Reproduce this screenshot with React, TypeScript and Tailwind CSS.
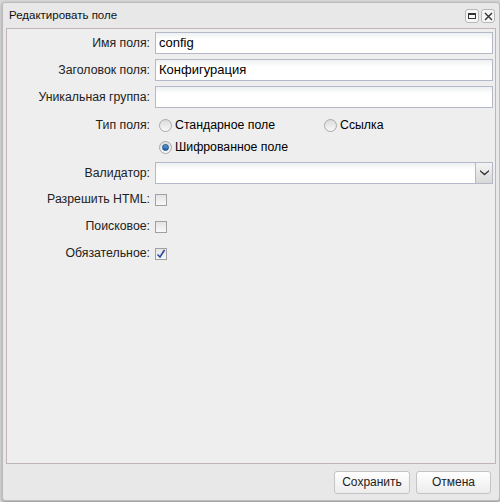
import React from "react";

const font = { fontFamily: '"Liberation Sans", Arial, sans-serif' };

function TextInput({ value }: { value?: string }) {
  return (
    <div className="h-[22px] flex-1 border border-[#b5b8c8] bg-gradient-to-b from-[#eef1f1] to-white to-[35%] px-[3px] flex items-center text-[13px] text-black">
      {value}
    </div>
  );
}

function Row({ label, children, h = "h-[22px]" }: { label: string; children: React.ReactNode; h?: string }) {
  return (
    <div className={`flex items-center ${h}`}>
      <div className="w-[148px] text-right pr-[5px] text-[12.3px] text-[#222]">{label}</div>
      {children}
    </div>
  );
}

function Radio({ checked }: { checked?: boolean }) {
  return (
    <span className="w-[13px] h-[13px] rounded-full border border-[#a9a9a9] bg-gradient-to-b from-[#dcdcdc] to-[#f8f8f8] flex items-center justify-center">
      {checked && <span className="w-[7px] h-[7px] rounded-full bg-gradient-to-b from-[#5aa0e0] to-[#1c5ea8] border border-[#1c4a80]" />}
    </span>
  );
}

function Check({ checked }: { checked?: boolean }) {
  return (
    <span className="w-[12px] h-[12px] border border-[#a0a0a0] bg-gradient-to-b from-[#e4e4e4] to-[#f8f8f8] flex items-center justify-center">
      {checked && (
        <svg width="10" height="10" viewBox="0 0 10 10">
          <path d="M1.5 5.5 L4 8 L8.5 1" stroke="#2a4a9a" strokeWidth="1.6" fill="none" />
        </svg>
      )}
    </span>
  );
}

export default function App() {
  return (
    <div className="w-[500px] h-[502px] bg-[#d8d8d8] relative overflow-hidden" style={font}>
      <div className="absolute left-[2px] top-[2px] right-0 bottom-[1px] bg-[#e8e8e8] border border-[#bcbcbc] rounded-[3px] shadow-[0_1px_3px_rgba(0,0,0,0.35)] flex flex-col">
        <div className="h-[25px] flex items-center pl-[6px] pr-[4px]">
          <div className="text-[11.5px] text-[#111] flex-1 pt-[1px]">Редактировать поле</div>
          <div className="flex gap-[2px] mt-[1px]">
            <div className="w-[14px] h-[14px] border border-[#b8b8b8] rounded-[3px] bg-[#f6f6f6] flex items-center justify-center">
              <div className="w-[8px] h-[6px] border border-[#333] border-t-2" />
            </div>
            <div className="w-[14px] h-[14px] border border-[#b8b8b8] rounded-[3px] bg-[#f6f6f6] flex items-center justify-center">
              <svg width="9" height="9" viewBox="0 0 9 9">
                <path d="M1 1 L8 8 M8 1 L1 8" stroke="#333" strokeWidth="1.4" />
              </svg>
            </div>
          </div>
        </div>
        <div className="mx-[3px] flex-1 border border-[#bfb5b5] bg-[#eeeeee] pt-[3px] pr-[2px] flex flex-col">
          <div className="flex flex-col gap-[5px]">
            <Row label="Имя поля:"><TextInput value="config" /></Row>
            <Row label="Заголовок поля:"><TextInput value="Конфигурация" /></Row>
            <Row label="Уникальная группа:"><TextInput /></Row>
          </div>
          <div className="flex mt-[6px]">
            <div className="w-[148px] text-right pr-[5px] text-[12.3px] text-[#222] h-[22px] flex items-center justify-end">Тип поля:</div>
            <div className="flex flex-col pl-[4px]">
              <div className="flex h-[22px] items-center">
                <div className="w-[165px] flex items-center gap-[3px] text-[12.3px] text-black"><Radio />Стандарное поле</div>
                <div className="flex items-center gap-[3px] text-[12.3px] text-black"><Radio />Ссылка</div>
              </div>
              <div className="flex h-[22px] items-center gap-[3px] text-[12.3px] text-black"><Radio checked />Шифрованное поле</div>
            </div>
          </div>
          <div className="mt-[4px]">
            <Row label="Валидатор:">
              <div className="h-[22px] flex-1 border border-[#b5b8c8] flex">
                <div className="flex-1 bg-gradient-to-b from-[#eef1f1] to-white to-[35%]" />
                <div className="w-[17px] border-l border-[#b5b8c8] bg-gradient-to-b from-[#f4f4f4] to-[#d8d8d8] flex items-center justify-center">
                  <svg width="9" height="6" viewBox="0 0 9 6">
                    <path d="M0 0 L4.5 3.5 L9 0 L9 1.5 L4.5 5.5 L0 1.5 Z" fill="#333" />
                  </svg>
                </div>
              </div>
            </Row>
          </div>
          <div className="flex flex-col mt-[2px]">
            <Row label="Разрешить HTML:" h="h-[27px]"><Check /></Row>
            <Row label="Поисковое:" h="h-[27px]"><Check /></Row>
            <Row label="Обязательное:" h="h-[27px]"><Check checked /></Row>
          </div>
        </div>
        <div className="h-[36px] flex items-center justify-end gap-[6px] pr-[8px]">
          <button className="w-[76px] h-[23px] border border-[#c4c4c4] rounded-[3px] bg-gradient-to-b from-white to-[#ececec] text-[12px] text-[#222]">Сохранить</button>
          <button className="w-[75px] h-[23px] border border-[#c4c4c4] rounded-[3px] bg-gradient-to-b from-white to-[#ececec] text-[12px] text-[#222]">Отмена</button>
        </div>
      </div>
    </div>
  );
}
